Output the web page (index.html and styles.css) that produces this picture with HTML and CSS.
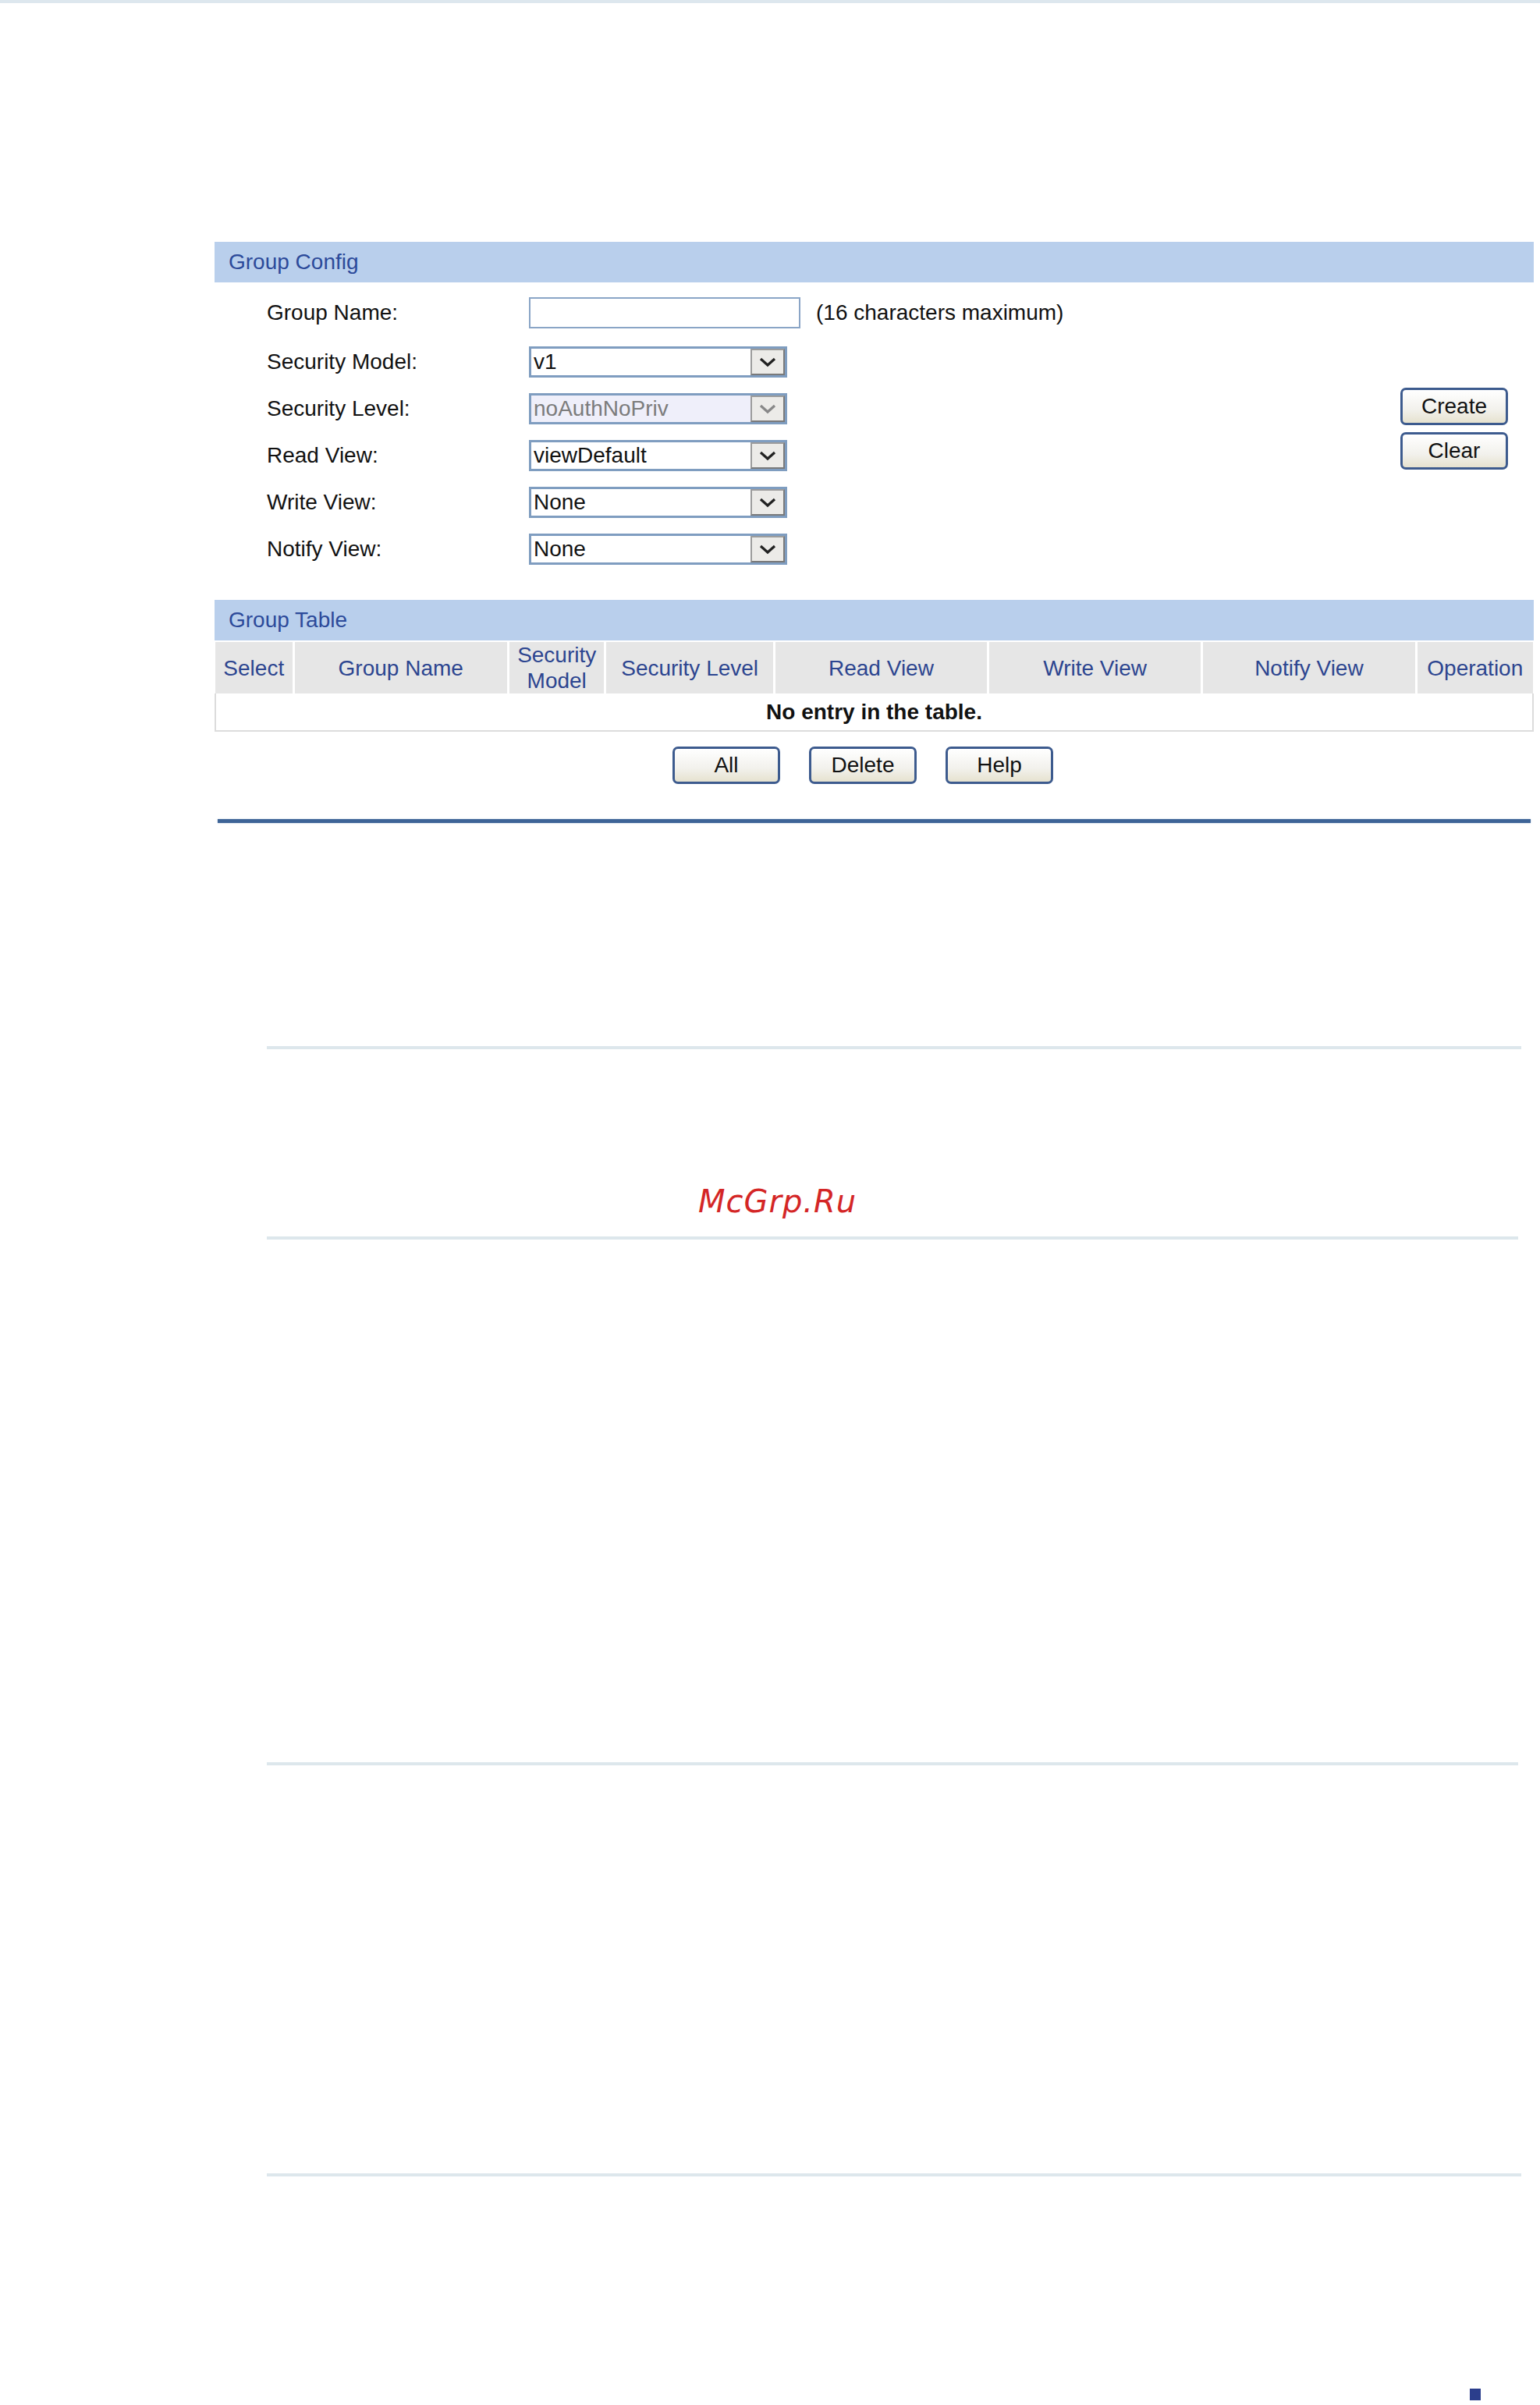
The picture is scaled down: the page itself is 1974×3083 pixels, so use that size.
FILE: index.html
```html
<!DOCTYPE html>
<html lang="en">
<head>
    <meta charset="UTF-8">
    <meta name="viewport" content="width=device-width, initial-scale=1.0">
    <title>Group Config</title>
    <link rel="stylesheet" href="styles.css">
</head>
<body>
<div class="page">
    <div class="panel">
        <div class="bar">Group Config</div>
        <div class="config">
            <div class="fields">
                <div class="row first">
                    <div class="label">Group Name:</div>
                    <div class="text-input"></div>
                    <div class="hint">(16 characters maximum)</div>
                </div>
                <div class="row">
                    <div class="label">Security Model:</div>
                    <div class="select"><span class="value">v1</span><span class="arrow"><svg width="22" height="13" viewBox="0 0 22 13"><path d="M2 2 L11 10 L20 2" fill="none" stroke="#222" stroke-width="3.2"/></svg></span></div>
                </div>
                <div class="row">
                    <div class="label">Security Level:</div>
                    <div class="select disabled"><span class="value">noAuthNoPriv</span><span class="arrow"><svg width="22" height="13" viewBox="0 0 22 13"><path d="M2 2 L11 10 L20 2" fill="none" stroke="#888" stroke-width="3.2"/></svg></span></div>
                </div>
                <div class="row">
                    <div class="label">Read View:</div>
                    <div class="select"><span class="value">viewDefault</span><span class="arrow"><svg width="22" height="13" viewBox="0 0 22 13"><path d="M2 2 L11 10 L20 2" fill="none" stroke="#222" stroke-width="3.2"/></svg></span></div>
                </div>
                <div class="row">
                    <div class="label">Write View:</div>
                    <div class="select"><span class="value">None</span><span class="arrow"><svg width="22" height="13" viewBox="0 0 22 13"><path d="M2 2 L11 10 L20 2" fill="none" stroke="#222" stroke-width="3.2"/></svg></span></div>
                </div>
                <div class="row">
                    <div class="label">Notify View:</div>
                    <div class="select"><span class="value">None</span><span class="arrow"><svg width="22" height="13" viewBox="0 0 22 13"><path d="M2 2 L11 10 L20 2" fill="none" stroke="#222" stroke-width="3.2"/></svg></span></div>
                </div>
            </div>
            <div class="side">
                <button class="btn">Create</button>
                <button class="btn">Clear</button>
            </div>
        </div>

        <div class="bar">Group Table</div>
        <table class="grid">
            <tr>
                <th class="c-select">Select</th>
                <th class="c-name">Group Name</th>
                <th class="c-model">Security<br>Model</th>
                <th class="c-level">Security Level</th>
                <th class="c-view">Read View</th>
                <th class="c-view">Write View</th>
                <th class="c-view">Notify View</th>
                <th class="c-op">Operation</th>
            </tr>
            <tr>
                <td colspan="8">No entry in the table.</td>
            </tr>
        </table>
        <div class="actions">
            <button class="btn">All</button>
            <button class="btn">Delete</button>
            <button class="btn">Help</button>
        </div>
        <div class="rule"></div>
    </div>

    <div class="doc">
        <div class="line first-line"></div>
        <div class="watermark">McGrp.Ru</div>
        <div class="line second-line"></div>
        <div class="line third-line"></div>
        <div class="line fourth-line"></div>
        <div class="page-mark"></div>
    </div>
</div>
</body>
</html>
```

FILE: styles.css
```css
body {
    margin: 0;
    background: #fff;
    font-family: "Liberation Sans", Arial, sans-serif;
    font-size: 28px;
    color: #111;
}
.page {
    border-top: 4px solid #dde7ee;
    height: 3079px;
    overflow: hidden;
}
.panel {
    width: 1691px;
    margin: 306px 0 0 275px;
}
.bar {
    background: #b9cfec;
    color: #2c4a9a;
    height: 52px;
    line-height: 52px;
    padding-left: 18px;
}
.config {
    display: flex;
    padding: 9px 0 35px;
}
.fields {
    flex: 1;
    padding-left: 67px;
}
.row {
    display: flex;
    align-items: center;
    height: 60px;
}
.row.first {
    margin-bottom: 3px;
}
.label {
    width: 336px;
}
.text-input {
    width: 348px;
    height: 40px;
    box-sizing: border-box;
    border: 2px solid #8aa5c6;
    background: #fff;
}
.hint {
    margin-left: 20px;
}
.select {
    display: flex;
    width: 331px;
    height: 40px;
    box-sizing: border-box;
    border: 3px solid #7f9dc0;
    background: #fff;
}
.select .value {
    flex: 1;
    padding-left: 3px;
    line-height: 34px;
}
.select .arrow {
    display: flex;
    align-items: center;
    justify-content: center;
    width: 44px;
    box-sizing: border-box;
    background: #ecebe8;
    border: 2px solid #9c9c9c;
    border-right-color: #7a7a7a;
    border-bottom-color: #7a7a7a;
}
.select.disabled {
    background: #efeffa;
    color: #7c7c7c;
}
.side {
    display: flex;
    flex-direction: column;
    gap: 9px;
    padding: 126px 33px 0 0;
}
.btn {
    width: 138px;
    height: 48px;
    box-sizing: border-box;
    border: 3px solid #3d5b8e;
    border-radius: 7px;
    background: linear-gradient(#ffffff, #f2f1ec 60%, #e6e2cf);
    font-family: "Liberation Sans", Arial, sans-serif;
    font-size: 28px;
    color: #111;
    padding: 0;
    cursor: pointer;
}
.grid {
    width: 100%;
    margin-top: 2px;
    border-collapse: collapse;
}
.grid th {
    height: 65px;
    padding: 0;
    background: #e6e6e6;
    color: #2c4590;
    font-weight: normal;
    line-height: 33px;
    border-left: 3px solid #fff;
}
.grid th:first-child {
    border-left: none;
}
.c-select { width: 99px; }
.c-name { width: 277px; }
.c-model { width: 122px; }
.c-level { width: 216px; }
.c-view { width: 276px; }
.c-op { width: 149px; }
.grid td {
    height: 47px;
    padding: 0;
    text-align: center;
    font-weight: bold;
    border: 2px solid #dcdcdc;
    border-top: none;
}
.actions {
    display: flex;
    justify-content: center;
    gap: 37px;
    margin-top: 19px;
    padding-right: 29px;
}
.rule {
    margin: 45px 0 0 4px;
    width: 1683px;
    height: 5px;
    background: #3e6497;
    box-shadow: 0 0 2px #a9bdd6;
}
.doc {
    margin-left: 342px;
}
.line {
    width: 1608px;
    height: 4px;
    background: #dde7ec;
}
.first-line {
    margin-top: 286px;
}
.watermark {
    margin: 171px 0 0 553px;
    height: 48px;
    line-height: 48px;
    font-family: "DejaVu Sans", sans-serif;
    font-style: italic;
    font-size: 40px;
    letter-spacing: 1px;
    color: #d42626;
}
.second-line {
    margin-top: 21px;
    width: 1604px;
}
.third-line {
    margin-top: 670px;
    width: 1604px;
}
.fourth-line {
    margin-top: 523px;
}
.page-mark {
    margin: 272px 0 0 1542px;
    width: 14px;
    height: 15px;
    background: #2b3e8c;
}
```
